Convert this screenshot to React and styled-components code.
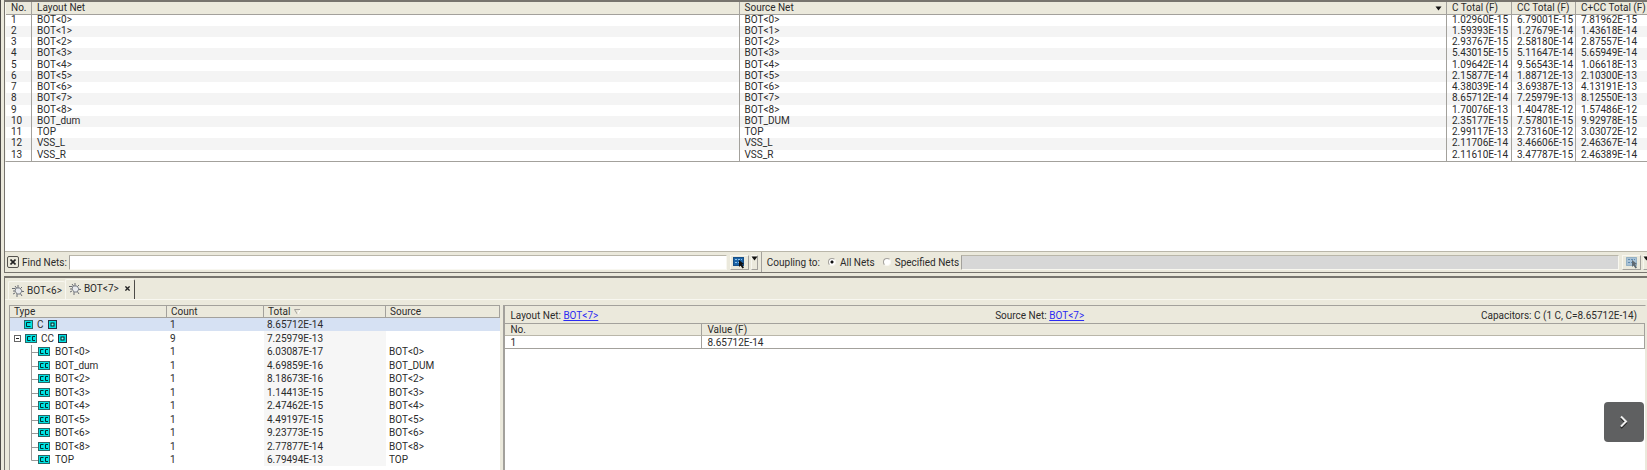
import React, { useState } from "react";
import styled, { createGlobalStyle, css } from "styled-components";

const c = {
  face: "#ebe9dc",
  dark: "#77746e",
  mid: "#a3a19c",
  soft: "#b9b6a9",
  light: "#f8f7f0",
  text: "#2b2b2b",
  stripe: "#f4f4f4",
  select: "#d6e1f3",
};

const Global = createGlobalStyle`
  * { box-sizing: border-box; }
  html, body { margin: 0; background: ${c.face}; }
  body, button, input { font: 10px/11px Roboto, "Liberation Sans", sans-serif; color: ${c.text}; }
`;

const Window = styled.div`
  display: flex;
  flex-direction: column;
  height: 100vh;
  overflow: hidden;
  position: relative;
  padding-left: 4px;
  background: ${c.face};
  border-left: 1px solid #4c4a47;
`;

const Pane = styled.section`
  flex: ${(p) => (p.$fill ? "1 0 0" : "none")};
  min-height: 0;
  display: flex;
  flex-direction: column;
  border: solid ${c.dark};
  border-width: 2px 0 0 1px;
  margin-left: -1px;
  & + & { margin-top: 3px; }
`;

const NetArea = styled.div`
  background: #fff;
  padding-bottom: 89px;
`;

const BaseTable = styled.table`
  width: 100%;
  table-layout: fixed;
  border-collapse: separate;
  border-spacing: 0;
  th, td {
    padding: 0;
    text-align: left;
    font-weight: 400;
    white-space: nowrap;
  }
`;

const NetTable = styled(BaseTable)`
  border-bottom: 1px solid ${c.mid};
  border-left: 1px solid ${c.light};
  th, td { padding-left: 5px; }
  th + th, td + td { border-left: 1px solid ${c.mid}; }
  th {
    height: 13px;
    line-height: 12px;
    background: ${c.face};
    border-bottom: 1px solid ${c.mid};
  }
  td { height: 11px; line-height: 10px; vertical-align: top; }
  tr:nth-child(4n) td { height: 12px; }
  tbody tr:nth-child(even) { background: ${c.stripe}; }
`;

const Col = styled.col`
  width: ${(p) => (p.$w ? p.$w + "px" : "auto")};
`;

const HeadLabel = styled.span`
  display: flex;
  align-items: center;
  justify-content: ${(p) => (p.$spread ? "space-between" : "flex-start")};
  gap: 4px;
  padding-right: 4px;
`;

const FindBar = styled.div`
  display: flex;
  border-top: 1px solid ${c.soft};
  border-bottom: 1px solid ${c.dark};
  height: 22px;
  margin-right: -6px;
`;

const FindHalf = styled.form`
  flex: 1 1 auto;
  min-width: 0;
  display: flex;
  align-items: center;
  padding: 0 3px 0 2px;
  & + & {
    border-left: 1px solid ${c.mid};
    padding-left: 5px;
  }
`;

const Field = styled.input`
  flex: 1 1 auto;
  width: 200px;
  min-width: 0;
  height: 15px;
  margin: 0 3px 0 2px;
  padding: 0 2px;
  border: 1px solid ${c.light};
  border-top-color: ${c.soft};
  border-left-color: ${c.mid};
  border-radius: 0;
  outline: 0;
  background: #fff;
  &:disabled { background: #d7d7d7; }
`;

const Button = styled.button`
  flex: none;
  display: flex;
  align-items: center;
  justify-content: center;
  padding: 0;
  width: ${(p) => p.$w}px;
  height: 15px;
  background: ${c.face};
  border: 1px solid ${c.mid};
  border-top-color: ${c.light};
  border-left-color: ${c.light};
  & + & { margin-left: 2px; align-items: flex-start; }
  svg { flex: none; }
`;

const CloseButton = styled(Button)`
  height: 12px;
  margin-right: 3px;
  border: 1px solid #55534e;
  border-radius: 2px;
`;

const RadioLabel = styled.label`
  display: flex;
  align-items: center;
  gap: 4px;
  margin-left: 8px;
  white-space: nowrap;
`;

const Radio = styled.input`
  appearance: none;
  width: 8px;
  height: 8px;
  margin: 0;
  border: 1px solid ${c.light};
  border-top-color: ${c.mid};
  border-left-color: ${c.mid};
  border-radius: 50%;
  background: #fff;
  &:checked { background: radial-gradient(circle, #111 0 1px, #fff 2px); }
`;

const TabBar = styled.div`
  display: flex;
  align-items: flex-end;
  padding: 1px 0 0 3px;
`;

const TabShell = styled.div`
  display: flex;
  align-items: center;
  gap: 4px;
  height: ${(p) => (p.$on ? 20 : 18)}px;
  padding: 0 3px;
  border: solid ${c.light};
  border-width: 1px 0 0 1px;
  border-radius: 2px 2px 0 0;
  ${(p) => p.$on && css`
    padding-bottom: 2px;
    border-right: 1px solid #4c4a47;
  `}
`;

const TabButton = styled.button`
  display: flex;
  align-items: center;
  gap: 3px;
  padding: 0;
  border: 0;
  background: none;
`;

const TabClose = styled(TabButton)`
  margin: 0 1px 0 2px;
`;

const Detail = styled.div`
  flex: 1 0 0;
  min-height: 0;
  display: grid;
  grid-template-columns: 3fr 7fr;
  border-top: 1px solid ${c.light};
  padding: 5px 0 0 4px;
`;

const TreePane = styled.div`
  overflow: hidden;
  background: #fff;
  border: solid ${c.mid};
  border-width: 1px 0 0 1px;
`;

const TreeTable = styled(BaseTable)`
  th {
    height: 12px;
    line-height: 11px;
    padding-left: 4px;
    background: ${c.face};
    border: 1px solid ${c.mid};
    border-width: 0 1px 1px 0;
  }
  td { height: 13px; line-height: 13px; padding-left: 3px; }
  td:first-child { padding-left: 4px; }
  tr:nth-child(even) td { height: 14px; }
  td:nth-child(3) { background: #f6f6f6; }
  tbody tr:first-child td { background: ${c.select}; }
`;

const TreeCell = styled.span`
  display: flex;
  align-items: center;
  gap: ${(p) => (p.$leaf ? 5 : 4)}px;
  padding-left: ${(p) => (p.$leaf ? 16 : p.$root ? 10 : 0)}px;
  svg { display: block; }
`;

const InfoPane = styled.div`
  display: flex;
  flex-direction: column;
  margin-left: 3px;
  margin-right: 1px;
  background: #fff;
  border: solid ${c.mid};
  border-width: 1px 1px 0 2px;
  border-right-color: ${c.face};
`;

const InfoBar = styled.div`
  display: flex;
  justify-content: space-between;
  align-items: center;
  height: 17px;
  padding: 2px 8px 0 5px;
  background: ${c.face};
`;

const NetLink = styled.a`
  color: #2b2bf2;
`;

const ValueTable = styled(BaseTable)`
  border: 1px solid ${c.mid};
  border-left: 0;
  th, td { padding-left: 5px; height: 12px; line-height: 11px; }
  th { background: ${c.face}; border-bottom: 1px solid ${c.soft}; }
  th + th, td + td { border-left: 1px solid ${c.mid}; }
`;

const NextButton = styled.button`
  position: absolute;
  right: 3px;
  bottom: 28px;
  width: 40px;
  height: 40px;
  display: grid;
  place-items: center;
  padding: 0;
  border: 0;
  border-radius: 4px;
  background: #5f6061;
`;

const Cross = ({ size = 6 }) => (
  <svg width={size} height={size} viewBox="0 0 6 6" aria-hidden="true">
    <path d="M.5 .5 5.5 5.5M5.5 .5 .5 5.5" stroke="#222" strokeWidth="1.6" />
  </svg>
);

const Arrow = () => (
  <svg width="7" height="5" viewBox="0 0 7 5" aria-hidden="true">
    <path d="M.5 .5h6L3.500 4.500z" fill="#111" />
  </svg>
);

const SortMark = () => (
  <svg width="7" height="6" viewBox="0 0 7 6" aria-hidden="true">
    <path d="M6.500 .5h-6L3.500 5.500" fill="none" stroke={c.mid} />
    <path d="M6.500 .5l-3 5" stroke="#fff" />
  </svg>
);

const PickIcon = ({ muted }) => (
  <svg width="14" height="13" viewBox="0 0 14 13" aria-hidden="true">
    <rect x="1.500" y="1.500" width="10" height="8" fill={muted ? "#a9c2d6" : "#1c64a8"} stroke={muted ? "#5f8cb0" : "#174f87"} strokeDasharray={muted ? "1 1" : "none"} />
    <path d="M3 3.500h7M3 6.500h6" stroke={muted ? "#5f8cb0" : "#8fc0e8"} strokeDasharray="2 1" />
    <path d="M7 4l5 4-2 .5 2 3-1.500 1-2-3L7 11z" fill={muted ? "#5f6a72" : "#111"} />
  </svg>
);

const NetIcon = () => (
  <svg width="12" height="12" viewBox="0 0 12 12" aria-hidden="true">
    <path d="M3 1l1.500 2M6 0v3M10 2L8 4M0 3.500h3M9 6.500h3M3 8l-2 1M5 9v3M8 8l2 3M1 6h2" stroke="#6a6d74" fill="none" />
    <path d="M4 3h4l2 3-2 3H5L3 6z" fill="#e8eaee" stroke="#7a7e86" />
  </svg>
);

const CapIcon = ({ double }) => (
  <svg width={double ? 12 : 9} height="9" viewBox={double ? "0 0 12 9" : "0 0 9 9"} aria-hidden="true">
    <rect x=".5" y=".5" width={double ? 11 : 8} height="8" fill="#00e2e2" stroke="#2d6666" />
    <path d={double ? "M5.500 2.500h-3v4h3M10 2.500H7.500v4H10" : "M6.500 2.500h-4v4h4"} fill="none" stroke="#033" />
  </svg>
);

const BoxIcon = () => (
  <svg width="9" height="9" viewBox="0 0 9 9" aria-hidden="true">
    <rect x=".5" y=".5" width="8" height="8" fill="#00e2e2" stroke="#234" />
    <rect x="3" y="3" width="3" height="3" fill="#8ff" stroke="#022" />
  </svg>
);

const Collapse = () => (
  <svg width="7" height="7" viewBox="0 0 7 7" aria-hidden="true">
    <rect x=".5" y=".5" width="6" height="6" fill="#fff" stroke="#666" />
    <path d="M2 3.500h3" stroke="#222" />
  </svg>
);

const Branch = styled(({ last, className }) => (
  <svg className={className} width="8" height="14" viewBox="0 0 8 14" aria-hidden="true">
    <path d={last ? "M1.500 0v7.500H8" : "M1.500 0v14M1.500 7.500H8"} fill="none" stroke="#999" />
  </svg>
))`
  margin: 0 -5px -1px 0;
`;

const nets = [
  ["BOT<0>", "BOT<0>", "1.02960E-15", "6.79001E-15", "7.81962E-15"],
  ["BOT<1>", "BOT<1>", "1.59393E-15", "1.27679E-14", "1.43618E-14"],
  ["BOT<2>", "BOT<2>", "2.93767E-15", "2.58180E-14", "2.87557E-14"],
  ["BOT<3>", "BOT<3>", "5.43015E-15", "5.11647E-14", "5.65949E-14"],
  ["BOT<4>", "BOT<4>", "1.09642E-14", "9.56543E-14", "1.06618E-13"],
  ["BOT<5>", "BOT<5>", "2.15877E-14", "1.88712E-13", "2.10300E-13"],
  ["BOT<6>", "BOT<6>", "4.38039E-14", "3.69387E-13", "4.13191E-13"],
  ["BOT<7>", "BOT<7>", "8.65712E-14", "7.25979E-13", "8.12550E-13"],
  ["BOT<8>", "BOT<8>", "1.70076E-13", "1.40478E-12", "1.57486E-12"],
  ["BOT_dum", "BOT_DUM", "2.35177E-15", "7.57801E-15", "9.92978E-15"],
  ["TOP", "TOP", "2.99117E-13", "2.73160E-12", "3.03072E-12"],
  ["VSS_L", "VSS_L", "2.11706E-14", "3.46606E-15", "2.46367E-14"],
  ["VSS_R", "VSS_R", "2.11610E-14", "3.47787E-15", "2.46389E-14"],
];

const couplings = [
  ["BOT<0>", "6.03087E-17", "BOT<0>"],
  ["BOT_dum", "4.69859E-16", "BOT_DUM"],
  ["BOT<2>", "8.18673E-16", "BOT<2>"],
  ["BOT<3>", "1.14413E-15", "BOT<3>"],
  ["BOT<4>", "2.47462E-15", "BOT<4>"],
  ["BOT<5>", "4.49197E-15", "BOT<5>"],
  ["BOT<6>", "9.23773E-15", "BOT<6>"],
  ["BOT<8>", "2.77877E-14", "BOT<8>"],
  ["TOP", "6.79494E-13", "TOP"],
];

export default function App() {
  const [scope, setScope] = useState("all");
  return (
    <Window>
      <Global />
      <Pane>
        <NetArea>
          <NetTable>
            <colgroup>
              <Col $w={25} /><Col /><Col /><Col $w={65} /><Col $w={64} /><Col $w={72} />
            </colgroup>
            <thead>
              <tr>
                <th>No.</th>
                <th>Layout Net</th>
                <th><HeadLabel $spread>Source Net<Arrow /></HeadLabel></th>
                <th>C Total (F)</th>
                <th>CC Total (F)</th>
                <th>C+CC Total (F)</th>
              </tr>
            </thead>
            <tbody>
              {nets.map((row, i) => (
                <tr key={row[0]}>
                  <td>{i + 1}</td>
                  {row.map((v, j) => <td key={j}>{v}</td>)}
                </tr>
              ))}
            </tbody>
          </NetTable>
        </NetArea>
        <FindBar>
          <FindHalf onSubmit={(e) => e.preventDefault()}>
            <CloseButton type="button" $w={12} aria-label="Close find bar"><Cross /></CloseButton>
            <label htmlFor="find">Find Nets:</label>
            <Field id="find" />
            <Button type="button" $w={19} aria-label="Pick net"><PickIcon /></Button>
            <Button type="button" $w={7} aria-label="Pick options"><Arrow /></Button>
          </FindHalf>
          <FindHalf onSubmit={(e) => e.preventDefault()}>
            <span>Coupling to:</span>
            <RadioLabel>
              <Radio type="radio" name="scope" checked={scope === "all"} onChange={() => setScope("all")} />
              All Nets
            </RadioLabel>
            <RadioLabel>
              <Radio type="radio" name="scope" checked={scope === "some"} onChange={() => setScope("some")} />
              Specified Nets
            </RadioLabel>
            <Field disabled={scope === "all"} aria-label="Specified nets" />
            <Button type="button" $w={19} aria-label="Pick specified net"><PickIcon muted /></Button>
            <Button type="button" $w={7} aria-label="Specified net options"><Arrow /></Button>
          </FindHalf>
        </FindBar>
      </Pane>
      <Pane $fill>
        <TabBar>
          <TabShell><TabButton><NetIcon />BOT&lt;6&gt;</TabButton></TabShell>
          <TabShell $on>
            <TabButton><NetIcon />BOT&lt;7&gt;</TabButton>
            <TabClose aria-label="Close tab"><Cross size={5} /></TabClose>
          </TabShell>
        </TabBar>
        <Detail>
          <TreePane>
            <TreeTable>
              <colgroup>
                <Col $w={157} /><Col $w={97} /><Col $w={122} /><Col />
              </colgroup>
              <thead>
                <tr>
                  <th>Type</th>
                  <th>Count</th>
                  <th><HeadLabel>Total<SortMark /></HeadLabel></th>
                  <th>Source</th>
                </tr>
              </thead>
              <tbody>
                <tr>
                  <td><TreeCell $root><CapIcon />C<BoxIcon /></TreeCell></td>
                  <td>1</td><td>8.65712E-14</td><td />
                </tr>
                <tr>
                  <td><TreeCell><Collapse /><CapIcon double />CC<BoxIcon /></TreeCell></td>
                  <td>9</td><td>7.25979E-13</td><td />
                </tr>
                {couplings.map(([name, total, source], i) => (
                  <tr key={name}>
                    <td>
                      <TreeCell $leaf>
                        <Branch last={i === couplings.length - 1} />
                        <CapIcon double />{name}
                      </TreeCell>
                    </td>
                    <td>1</td><td>{total}</td><td>{source}</td>
                  </tr>
                ))}
              </tbody>
            </TreeTable>
          </TreePane>
          <InfoPane>
            <InfoBar>
              <span>Layout Net: <NetLink href="#layout">BOT&lt;7&gt;</NetLink></span>
              <span>Source Net: <NetLink href="#source">BOT&lt;7&gt;</NetLink></span>
              <span>Capacitors: C (1 C, C=8.65712E-14)</span>
            </InfoBar>
            <ValueTable>
              <colgroup><Col $w={196} /><Col /></colgroup>
              <thead><tr><th>No.</th><th>Value (F)</th></tr></thead>
              <tbody><tr><td>1</td><td>8.65712E-14</td></tr></tbody>
            </ValueTable>
          </InfoPane>
        </Detail>
      </Pane>
      <NextButton aria-label="Next">
        <svg width="10" height="14" viewBox="0 0 10 14" aria-hidden="true">
          <path d="M2 3l5 5-5 5" fill="none" stroke="#222" strokeWidth="2" />
          <path d="M2 1.500l5 5-5 5" fill="none" stroke="#eee" strokeWidth="2" />
        </svg>
      </NextButton>
    </Window>
  );
}
